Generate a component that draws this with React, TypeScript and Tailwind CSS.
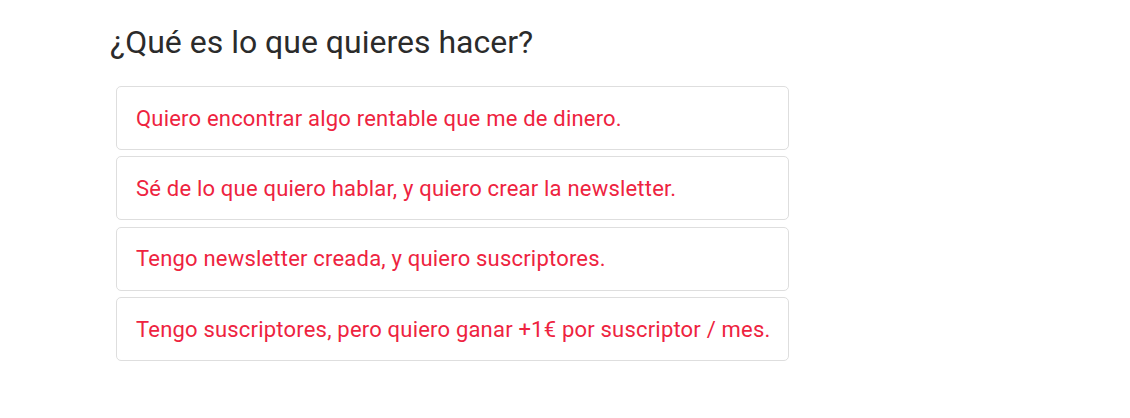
const options = [
  "Quiero encontrar algo rentable que me de dinero.",
  "Sé de lo que quiero hablar, y quiero crear la newsletter.",
  "Tengo newsletter creada, y quiero suscriptores.",
  "Tengo suscriptores, pero quiero ganar +1€ por suscriptor / mes.",
];

const App = () => {
  return (
    <main className="min-h-screen bg-white font-['Roboto',sans-serif]">
      <div className="pl-[110px] pt-[22px]">
        <h2 className="text-[32px] leading-[40px] text-[#2b2b2b]">
          ¿Qué es lo que quieres hacer?
        </h2>
        <div className="mt-[24px] ml-[6px] flex w-[673px] flex-col gap-[6.4px]">
          {options.map((o) => (
            <button
              key={o}
              className="h-[64px] whitespace-nowrap rounded-[5px] border border-[#dedede] bg-white pl-[19px] pr-[10px] text-left text-[22px] tracking-[0.2px] text-[#ee2340]"
            >
              {o}
            </button>
          ))}
        </div>
      </div>
    </main>
  );
};

export default App;
